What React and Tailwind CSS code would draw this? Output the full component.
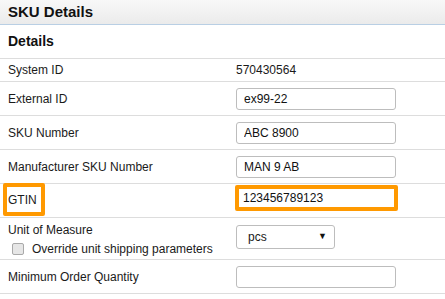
import React from "react";

const font = { fontFamily: '"Liberation Sans", Arial, sans-serif' };

function Row({ label, children, className = "h-[34px]" }) {
  return (
    <div className={`grid grid-cols-[236px_1fr] items-center border-b border-[#dddddd] ${className}`}>
      <div className="pl-2">{label}</div>
      <div>{children}</div>
    </div>
  );
}

function TextInput({ value = "" }) {
  return (
    <input
      readOnly
      value={value}
      className="block h-[22px] w-[160px] rounded-[3px] border border-[#bdbdbd] bg-white px-[7px] text-[12px] text-[#111] outline-none"
      style={font}
    />
  );
}

export default function App() {
  return (
    <div className="h-[299px] w-[445px] overflow-hidden bg-white text-[12px] text-[#1a1a1a]" style={font}>
      {/* panel header */}
      <div className="flex h-[25px] items-center border-b border-[#b9cfe4] bg-gradient-to-b from-[#f8f8f8] to-[#ebebeb] px-2">
        <h2 className="text-[15px] font-bold text-[#111]">SKU Details</h2>
      </div>

      <div className="flex h-[34px] items-center border-b border-[#dddddd] px-2">
        <h3 className="text-[14px] font-bold text-[#111]">Details</h3>
      </div>

      <Row label="System ID" className="h-[23px]">
        <span>570430564</span>
      </Row>
      <Row label="External ID">
        <TextInput value="ex99-22" />
      </Row>
      <Row label="SKU Number">
        <TextInput value="ABC 8900" />
      </Row>
      <Row label="Manufacturer SKU Number">
        <TextInput value="MAN 9 AB" />
      </Row>

      {/* highlighted row */}
      <div className="grid h-[34px] grid-cols-[236px_1fr] items-start border-b border-[#dddddd]">
        <div className="-mt-[1px] pl-[3px]">
          <div className="flex h-[33px] w-[42px] items-center rounded-[2px] border-4 border-[#ff9900] pl-[1px]">
            GTIN
          </div>
        </div>
        <div className="-ml-[1px] pt-[1px]">
          <input
            readOnly
            value="123456789123"
            className="block h-[26px] w-[163px] rounded-[2px] border-4 border-[#ff9900] bg-white px-[4px] text-[12px] text-[#111] outline-none"
            style={font}
          />
        </div>
      </div>

      <div className="grid h-[42px] grid-cols-[236px_1fr] border-b border-[#dddddd]">
        <div className="pl-2 pt-[4px]">
          <div className="leading-[16px]">Unit of Measure</div>
          <label className="mt-[2px] flex items-center gap-[8px] pl-[4px]">
            <span className="inline-block h-[12px] w-[12px] rounded-[2px] border border-[#a9a9a9] bg-[#e6e6e6]" />
            <span>Override unit shipping parameters</span>
          </label>
        </div>
        <div className="pt-[7px]">
          <div className="flex h-[24px] w-[99px] items-center justify-between rounded-[3px] border border-[#bdbdbd] bg-white pl-[11px] pr-[7px]">
            <span>pcs</span>
            <span className="text-[9px] text-[#111]">▼</span>
          </div>
        </div>
      </div>

      <Row label="Minimum Order Quantity">
        <TextInput />
      </Row>
    </div>
  );
}
